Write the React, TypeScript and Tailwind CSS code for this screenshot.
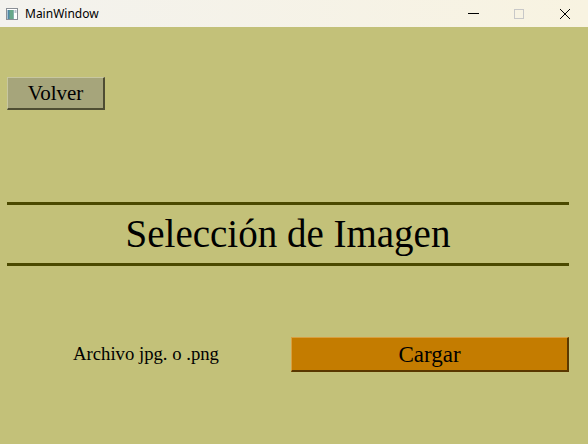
import React from 'react';

const TitleBar: React.FC = () => (
  <div className="h-[27px] flex items-center bg-gradient-to-r from-[#f3f2ee] to-[#f8f3e1] shrink-0">
    {/* window icon */}
    <svg className="ml-[6px]" width="12" height="12" viewBox="0 0 12 12">
      <rect x="0.5" y="0.5" width="11" height="11" fill="#ffffff" stroke="#8a8f96" />
      <rect x="1.5" y="2" width="6" height="9" fill="#4f86a6" />
      <rect x="3.5" y="2" width="4" height="9" fill="#69a88a" />
      <rect x="8.5" y="2" width="2" height="3" fill="#b8c2cb" />
    </svg>
    <span className="ml-[7px] text-[12px] text-black font-['Segoe_UI','Noto_Sans',sans-serif]">MainWindow</span>
    <div className="ml-auto flex items-center h-full">
      <div className="w-[46px] h-full flex items-center justify-center">
        <div className="w-[11px] h-px bg-black" />
      </div>
      <div className="w-[46px] h-full flex items-center justify-center">
        <div className="w-[10px] h-[10px] border border-[#c8c8c8]" />
      </div>
      <div className="w-[46px] h-full flex items-center justify-center">
        <svg width="12" height="12" viewBox="0 0 12 12">
          <path d="M1 1 L11 11 M11 1 L1 11" stroke="#000" strokeWidth="1" />
        </svg>
      </div>
    </div>
  </div>
);

const App: React.FC = () => {
  return (
    <div className="w-[588px] h-[444px] bg-[#c3c179] flex flex-col overflow-hidden font-['Liberation_Serif',serif] text-black">
      <TitleBar />
      <div className="flex flex-col pl-[7px] pr-[19px]">
        {/* Volver button */}
        <button className="mt-[50px] w-[98px] h-[33px] bg-[#a6a57b] border-t border-l border-t-[#c8c7a0] border-l-[#c8c7a0] border-b-2 border-r-2 border-b-[#4e4d33] border-r-[#4e4d33] text-[21px] leading-none flex items-center justify-center">
          Volver
        </button>

        {/* Title section */}
        <div className="mt-[92px] flex flex-col">
          <div className="h-[3px] bg-[#4b4900]" />
          <div className="h-[58px] flex items-center justify-center text-[39px] pt-px">Selección de Imagen</div>
          <div className="h-[3px] bg-[#4b4900]" />
        </div>

        {/* Load row */}
        <div className="mt-[71px] flex items-center">
          <div className="w-[284px] flex justify-center text-[18.7px] pr-[6px]">Archivo jpg. o .png</div>
          <button className="w-[278px] h-[35px] bg-[#c47c00] border-t border-l border-t-[#d9a040] border-l-[#d9a040] border-b-2 border-r-2 border-b-[#5a3800] border-r-[#5a3800] text-[23px] leading-none flex items-center justify-center">
            Cargar
          </button>
        </div>
      </div>
    </div>
  );
};

export default App;
